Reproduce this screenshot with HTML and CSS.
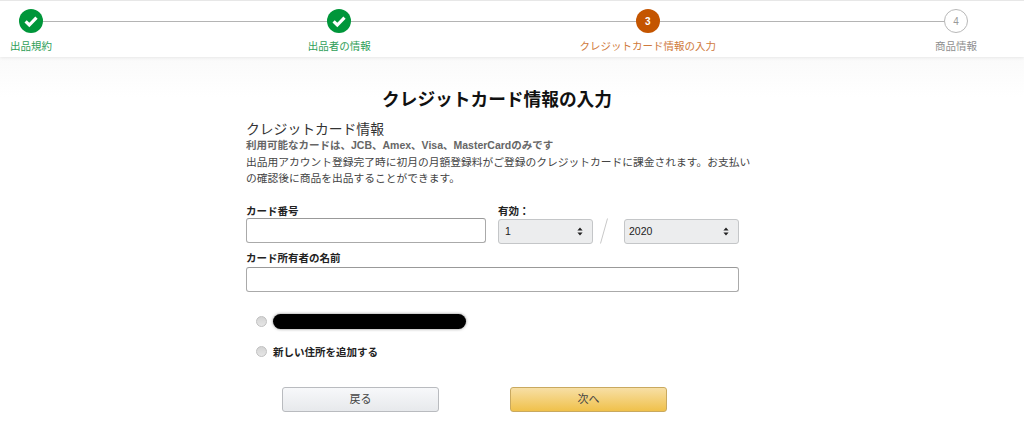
FILE: index.html
```html
<!DOCTYPE html>
<html lang="ja">
<head>
<meta charset="utf-8">
<title>クレジットカード情報の入力</title>
<link rel="stylesheet" href="styles.css">
</head>
<body>
<header class="progress">
  <ol class="steps">
    <li class="step done">
      <span class="dot"><svg class="check" viewBox="0 0 24 24" width="24" height="24"><path d="M6.6 12.4l3.7 3.6 7.2-7.4" fill="none" stroke="#fff" stroke-width="3.2"/></svg></span>
      <span class="step-label">出品規約</span>
    </li>
    <li class="step done">
      <span class="dot"><svg class="check" viewBox="0 0 24 24" width="24" height="24"><path d="M6.6 12.4l3.7 3.6 7.2-7.4" fill="none" stroke="#fff" stroke-width="3.2"/></svg></span>
      <span class="step-label">出品者の情報</span>
    </li>
    <li class="step current">
      <span class="dot">3</span>
      <span class="step-label">クレジットカード情報の入力</span>
    </li>
    <li class="step todo">
      <span class="dot">4</span>
      <span class="step-label">商品情報</span>
    </li>
  </ol>
</header>
<main class="content">
  <h1 class="title">クレジットカード情報の入力</h1>
  <form class="card-form">
    <h2 class="section-title">クレジットカード情報</h2>
    <p class="note-strong">利用可能なカードは、JCB、Amex、Visa、MasterCardのみです</p>
    <p class="note">出品用アカウント登録完了時に初月の月額登録料がご登録のクレジットカードに課金されます。お支払いの確認後に商品を出品することができます。</p>
    <div class="row-card">
      <div class="field field-number">
        <label class="label">カード番号</label>
        <input class="text-input" type="text">
      </div>
      <div class="expiry">
        <label class="label">有効：</label>
        <div class="expiry-row">
          <div class="select select-month"><span>1</span><svg class="updown" width="6" height="9" viewBox="0 0 6 9"><path d="M3 0.5L5.6 3.6H0.4zM3 8.5L0.4 5.4H5.6z" fill="#222"/></svg></div>
          <svg class="slash" width="8" height="26" viewBox="0 0 8 26"><path d="M7.5 0.5L0.5 25.5" stroke="#c8c8c8" stroke-width="1" fill="none"/></svg>
          <div class="select select-year"><span>2020</span><svg class="updown" width="6" height="9" viewBox="0 0 6 9"><path d="M3 0.5L5.6 3.6H0.4zM3 8.5L0.4 5.4H5.6z" fill="#222"/></svg></div>
        </div>
      </div>
    </div>
    <div class="field field-name">
      <label class="label">カード所有者の名前</label>
      <input class="text-input" type="text">
    </div>
    <div class="addresses">
      <div class="address"><span class="radio"></span><span class="redacted"></span></div>
      <div class="address"><span class="radio"></span><span class="address-text">新しい住所を追加する</span></div>
    </div>
    <div class="actions">
      <button class="btn btn-back" type="button">戻る</button>
      <button class="btn btn-next" type="button">次へ</button>
    </div>
  </form>
</main>
</body>
</html>
```
FILE: styles.css
```css
* { box-sizing: border-box; }
html, body { margin: 0; padding: 0; }
body {
  width: 1024px;
  height: 438px;
  overflow: hidden;
  background: #fff;
  font-family: "Liberation Sans", "Noto Sans CJK JP", sans-serif;
  color: #111;
}
.progress {
  height: 57px;
  background: #fff;
  border-top: 1px solid #e7e7e7;
  box-shadow: 0 1px 3px rgba(0,0,0,.08);
  position: relative;
}
.steps {
  list-style: none;
  margin: 0;
  padding: 8px 0 0 19px;
  width: 968px;
  display: flex;
  justify-content: space-between;
  position: relative;
}
.steps::before {
  content: "";
  position: absolute;
  left: 31px;
  right: 12px;
  top: 20px;
  height: 1px;
  background: #b4b4b4;
}
.step {
  width: 24px;
  display: flex;
  flex-direction: column;
  align-items: center;
  position: relative;
}
.dot {
  width: 24px;
  height: 24px;
  border-radius: 50%;
  display: flex;
  align-items: center;
  justify-content: center;
  font-size: 10px;
  font-weight: bold;
  color: #fff;
}
.done .dot { background: #00963a; }
.current .dot { background: #c45500; }
.todo .dot {
  background: #fff;
  border: 1px solid #b8b8b8;
  color: #999;
  font-weight: normal;
}
.step-label {
  margin: 6px -70px 0;
  font-size: 10.5px;
  line-height: 14px;
  white-space: nowrap;
  text-align: center;
}
.done .step-label { color: #2f9e58; }
.current .step-label { color: #cf7a3c; }
.todo .step-label { color: #8f8f8f; }

.content {
  height: 380px;
  padding-top: 33px;
  background: linear-gradient(#fafafa, #fff 40px);
}
.title {
  margin: 0;
  padding-right: 30px;
  font-size: 17.7px;
  line-height: 20px;
  font-weight: bold;
  text-align: center;
  color: #111;
}
.card-form {
  width: 493px;
  margin: 12px 0 0 246px;
}
.section-title {
  margin: 0;
  font-size: 13.8px;
  line-height: 16px;
  font-weight: normal;
  color: #333;
}
.note-strong {
  margin: 0;
  font-size: 10.5px;
  line-height: 15px;
  font-weight: bold;
  color: #666;
}
.note {
  margin: 1px -12px 0 0;
  font-size: 10.75px;
  line-height: 16px;
  color: #444;
}
.row-card {
  display: flex;
  margin-top: 19px;
}
.field-number { width: 240px; }
.expiry { margin-left: 12px; width: 241px; }
.label {
  display: block;
  font-size: 10.5px;
  line-height: 13px;
  font-weight: bold;
  color: #222;
}
.text-input {
  display: block;
  width: 100%;
  height: 25px;
  padding: 0 6px;
  background: #fff;
  border: 1px solid #aaa;
  border-top-color: #999;
  border-radius: 3px;
}
.expiry-row {
  display: flex;
  align-items: center;
}
.select {
  height: 25px;
  padding: 0 9px 0 6px;
  display: flex;
  align-items: center;
  justify-content: space-between;
  background: #ecedee;
  border: 1px solid #c4c6c8;
  border-radius: 3px;
  font-size: 10.5px;
  color: #222;
}
.select-month { width: 95px; }
.select-year { width: 115px; padding-left: 4px; }
.slash { margin: 0 16px 0 7px; flex: none; }
.field-name { margin-top: 8px; }
.field-name .text-input { margin-top: 2px; }
.addresses {
  margin-top: 21px;
  padding-left: 10px;
}
.address {
  display: flex;
  align-items: center;
  height: 16px;
  margin-bottom: 14px;
}
.radio {
  width: 11px;
  height: 11px;
  border-radius: 50%;
  border: 1px solid #c0c0c0;
  background: linear-gradient(#d4d4d4, #e6e6e6);
  flex: none;
}
.redacted {
  width: 193px;
  height: 15px;
  margin-left: 6px;
  background: #000;
  border-radius: 8px;
  box-shadow: 0 0 3px rgba(0,0,0,.5);
}
.address-text {
  margin-left: 6px;
  font-size: 10.5px;
  font-weight: bold;
  color: #222;
}
.actions {
  display: flex;
  margin: 28px 0 0 36px;
  gap: 71px;
}
.btn {
  width: 157px;
  height: 25px;
  padding: 0 0 3px;
  border-radius: 3px;
  font-family: inherit;
  font-size: 11px;
  color: #444;
}
.btn-back {
  background: linear-gradient(#f7f8fa, #e7e9ec);
  border: 1px solid #b9bbbf;
}
.btn-next {
  background: linear-gradient(#f7dfa5, #f0c14b);
  border: 1px solid #c9a95f;
}
```
